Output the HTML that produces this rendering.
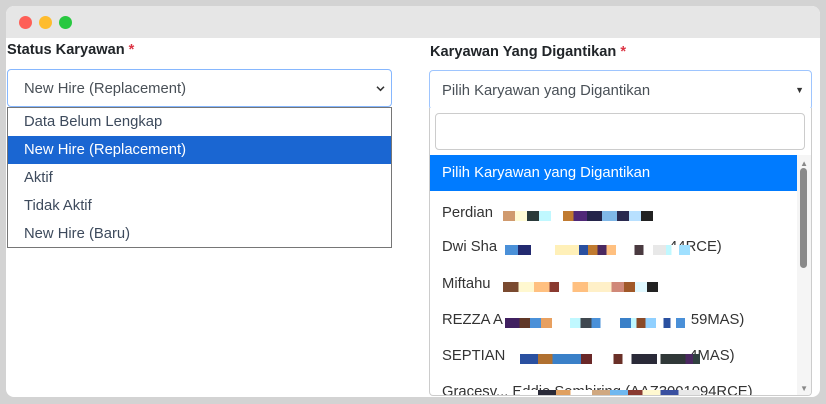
<!DOCTYPE html>
<html><head><style>
*{box-sizing:border-box;margin:0;padding:0}
body{width:826px;height:404px;background:#d3d3d3;font-family:"Liberation Sans",sans-serif;position:relative;overflow:hidden;color:#333}
.win{position:absolute;left:6px;top:6px;width:814px;height:391px;background:#fff;border-radius:8px;overflow:hidden}
.tb{position:absolute;left:0;top:0;width:100%;height:32px;background:#e6e6e6}
.dot{position:absolute;top:10px;width:13px;height:13px;border-radius:50%}
.abs{position:absolute}
.lbl{font-weight:bold;font-size:14.6px;color:#212529;line-height:17px}
.lbl span{color:#dc3545}
.pix{position:absolute;height:10px}
.it{height:28px;padding:0 16px;line-height:29px}
</style></head><body>
<div class="win">
<div class="tb">
<div class="dot" style="left:13px;background:#fe5f57"></div>
<div class="dot" style="left:33px;background:#febc2e"></div>
<div class="dot" style="left:53px;background:#28c840"></div>
</div>
<div class="abs lbl" style="left:1px;top:36px">Status Karyawan <span>*</span></div>
<div class="abs" style="left:1px;top:63px;width:385px;height:38px;border:1px solid #86b7fe;border-radius:4px;font-size:14.8px;color:#495057;padding:0 16px;line-height:38px">New Hire (Replacement)<svg style="position:absolute;right:6px;top:15px" width="9" height="7" viewBox="0 0 10 8"><path d="M1 2 L5 6 L9 2" fill="none" stroke="#333" stroke-width="1.8"/></svg></div>
<div class="abs" style="left:1px;top:101px;width:385px;height:141px;border:1px solid #767676;background:#fff;font-size:14.8px;color:#3d4a5c">
<div class="it">Data Belum Lengkap</div>
<div class="it" style="background:#1a66d2;color:#fff">New Hire (Replacement)</div>
<div class="it">Aktif</div>
<div class="it">Tidak Aktif</div>
<div class="it">New Hire (Baru)</div>
</div>
<div class="abs lbl" style="left:424px;top:38px">Karyawan Yang Digantikan <span>*</span></div>
<div class="abs" style="left:423px;top:64px;width:383px;height:40px;border:1px solid #9ec5fe;border-radius:4px;font-size:14.8px;color:#495057;padding:0 12px;line-height:40px">Pilih Karyawan yang Digantikan<span style="position:absolute;right:7px;top:0;font-size:9px;color:#333;line-height:38px">&#9660;</span></div>
<div class="abs" style="left:423px;top:102px;width:383px;height:288px;border:1px solid #ccc;border-top:none;background:#fff;border-radius:0 0 4px 4px;overflow:hidden;font-size:14.8px;color:#333;line-height:17px">
<div style="position:absolute;left:5px;top:5px;width:370px;height:37px;border:1px solid #ccc;border-radius:4px"></div>
<div style="position:absolute;left:0;top:47px;width:368px;height:36px;background:#007bff;color:#fff;padding:0 12px;line-height:37px">Pilih Karyawan yang Digantikan</div>
<div style="position:absolute;left:12px;top:97px">Perdian</div>
<div style="position:absolute;left:12px;top:131px">Dwi Sha<span style="margin-left:172px">44RCE)</span></div>
<div style="position:absolute;left:12px;top:168px">Miftahu</div>
<div style="position:absolute;left:12px;top:204px">REZZA A<span style="margin-left:188px">59MAS)</span></div>
<div style="position:absolute;left:12px;top:240px">SEPTIAN<span style="margin-left:184px">4MAS)</span></div>
<div style="position:absolute;left:12px;top:276px">Gracesv... Eddie Sembiring (AAZ3001094RCE)</div>
<div class="pix" style="left:73px;top:103px;width:150px;background:linear-gradient(90deg,#d09a6e 0 8%,#fffbd6 8% 16%,#2a3a3a 16% 24%,#c0f8ff 24% 32%,#fff 32% 40%,#c07a30 40% 47%,#502878 47% 56%,#24244a 56% 66%,#80b8e8 66% 76%,#2a2a50 76% 84%,#b8e0ff 84% 92%,#222 92%)"></div>
<div class="pix" style="left:75px;top:137px;width:185px;background:linear-gradient(90deg,#4a90d8 0 7%,#222a70 7% 14%,#fff 14% 27%,#fff0b8 27% 40%,#2a50a0 40% 45%,#c07a30 45% 50%,#4a2860 50% 55%,#ffc080 55% 60%,#fff 60% 70%,#4a3a40 70% 75%,#fff 75% 80%,#e8e8e8 80% 87%,#c0f8ff 87% 90%,#fff 90% 94%,#a0e0ff 94%)"></div>
<div class="pix" style="left:73px;top:174px;width:155px;background:linear-gradient(90deg,#7a4a30 0 10%,#fff8d0 10% 20%,#ffc080 20% 30%,#8a3a30 30% 36%,#fff 36% 45%,#ffc080 45% 55%,#fff0c8 55% 70%,#d08878 70% 78%,#a05828 78% 85%,#e0f8ff 85% 93%,#222 93%)"></div>
<div class="pix" style="left:75px;top:210px;width:180px;background:linear-gradient(90deg,#402060 0 8%,#603828 8% 14%,#4a90d8 14% 20%,#e8a060 20% 26%,#fff 26% 36%,#c0f8ff 36% 42%,#404850 42% 48%,#4a90d8 48% 53%,#fff 53% 64%,#3a80c8 64% 70%,#c0f8ff 70% 73%,#8a4a28 73% 78%,#90d0ff 78% 84%,#fff 84% 88%,#2a50a0 88% 92%,#fff 92% 95%,#4a90d8 95%)"></div>
<div class="pix" style="left:90px;top:246px;width:180px;background:linear-gradient(90deg,#2a50a0 0 10%,#b07030 10% 18%,#3a80c8 18% 34%,#6a2828 34% 40%,#fff 40% 52%,#6a3028 52% 57%,#fff 57% 62%,#2a2a38 62% 76%,#fff 76% 78%,#303838 78% 92%,#4a2860 92% 96%,#304040 96%)"></div>
<div class="pix" style="left:90px;top:282px;width:180px;background:linear-gradient(90deg,#fff 0 10%,#2a2a38 10% 20%,#e0a060 20% 28%,#fff 28% 40%,#d0a880 40% 50%,#70b8f0 50% 60%,#8a3a30 60% 68%,#fff8d0 68% 78%,#3a50a0 78% 88%,#e8e8e8 88%)"></div>
<div style="position:absolute;right:0;top:47px;width:14px;height:241px;background:#f5f5f5"></div>
<div style="position:absolute;right:4px;top:60px;width:7px;height:100px;background:#8a8a8a;border-radius:4px"></div>
<div style="position:absolute;right:3px;top:51px;font-size:8px;color:#888;line-height:10px">&#9650;</div>
<div style="position:absolute;right:3px;top:276px;font-size:8px;color:#888;line-height:10px">&#9660;</div>
</div>
</div>
</body></html>
